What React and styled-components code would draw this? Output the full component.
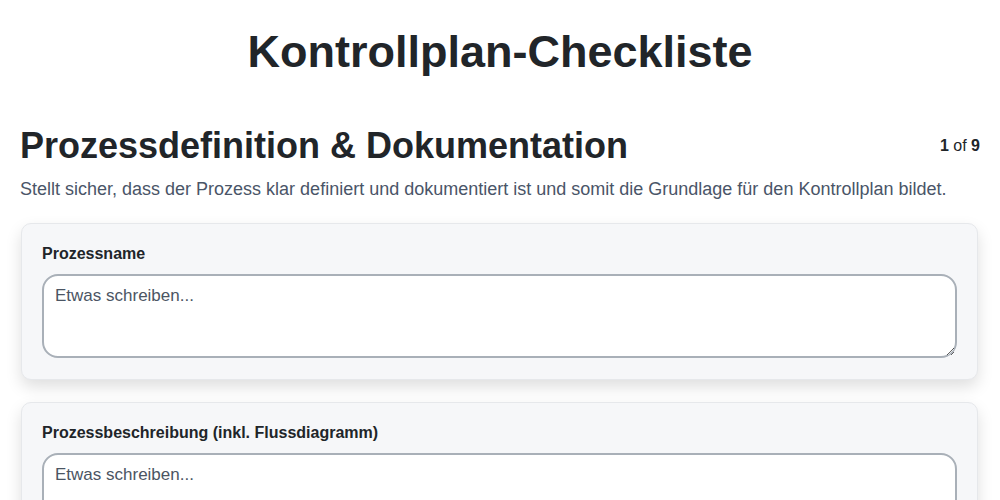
import React from "react";
import styled, { createGlobalStyle } from "styled-components";

const GlobalStyle = createGlobalStyle`
  body {
    margin: 0;
    background: #ffffff;
    font-family: "Liberation Sans", Arial, sans-serif;
    color: #212529;
  }
`;

const fields = [
  { id: "name", label: "Prozessname" },
  { id: "desc", label: "Prozessbeschreibung (inkl. Flussdiagramm)" },
];

function App() {
  return (
    <>
      <GlobalStyle />
      <Page>
        <Title>Kontrollplan-Checkliste</Title>
        <SectionHead>
          <SectionTitle>Prozessdefinition &amp; Dokumentation</SectionTitle>
          <Counter>
            <b>1</b> of <b>9</b>
          </Counter>
        </SectionHead>
        <Description>
          Stellt sicher, dass der Prozess klar definiert und dokumentiert ist
          und somit die Grundlage für den Kontrollplan bildet.
        </Description>
        <Cards>
          {fields.map((f) => (
            <Card key={f.id}>
              <Label htmlFor={f.id}>{f.label}</Label>
              <TextArea id={f.id} placeholder="Etwas schreiben..." />
            </Card>
          ))}
        </Cards>
      </Page>
    </>
  );
}

export default App;

const Page = styled.div`
  padding: 0 20px;
`;

const Title = styled.h1`
  margin: 26px 0 0;
  text-align: center;
  font-size: 45px;
  font-weight: 700;
  color: #212529;
`;

const SectionHead = styled.div`
  display: flex;
  justify-content: space-between;
  align-items: center;
  margin-top: 47px;
`;

const SectionTitle = styled.h2`
  margin: 0;
  font-size: 36px;
  font-weight: 700;
  color: #212529;
`;

const Counter = styled.div`
  font-size: 16px;
  color: #212529;
`;

const Description = styled.p`
  margin: 12px 0 0;
  font-size: 18px;
  color: #4a5568;
`;

const Cards = styled.div`
  display: flex;
  flex-direction: column;
  gap: 22px;
  margin-top: 23px;
  padding: 0 2px 0 1px;
`;

const Card = styled.div`
  background: #f6f7f9;
  border: 1px solid #e6e8eb;
  border-radius: 10px;
  padding: 21px 20px 21px;
  box-shadow: 0 7px 16px rgba(0, 0, 0, 0.13);
`;

const Label = styled.label`
  display: block;
  font-size: 16px;
  font-weight: 700;
  color: #212529;
  margin-bottom: 11px;
`;

const TextArea = styled.textarea`
  display: block;
  box-sizing: border-box;
  width: 100%;
  height: 84px;
  padding: 10px 11px;
  border: 2px solid #a9b0b8;
  border-radius: 16px;
  background: #ffffff;
  font-family: "Liberation Sans", Arial, sans-serif;
  font-size: 17px;
  color: #212529;
  outline: none;
  resize: vertical;

  &::placeholder {
    color: #4b5563;
  }
`;
